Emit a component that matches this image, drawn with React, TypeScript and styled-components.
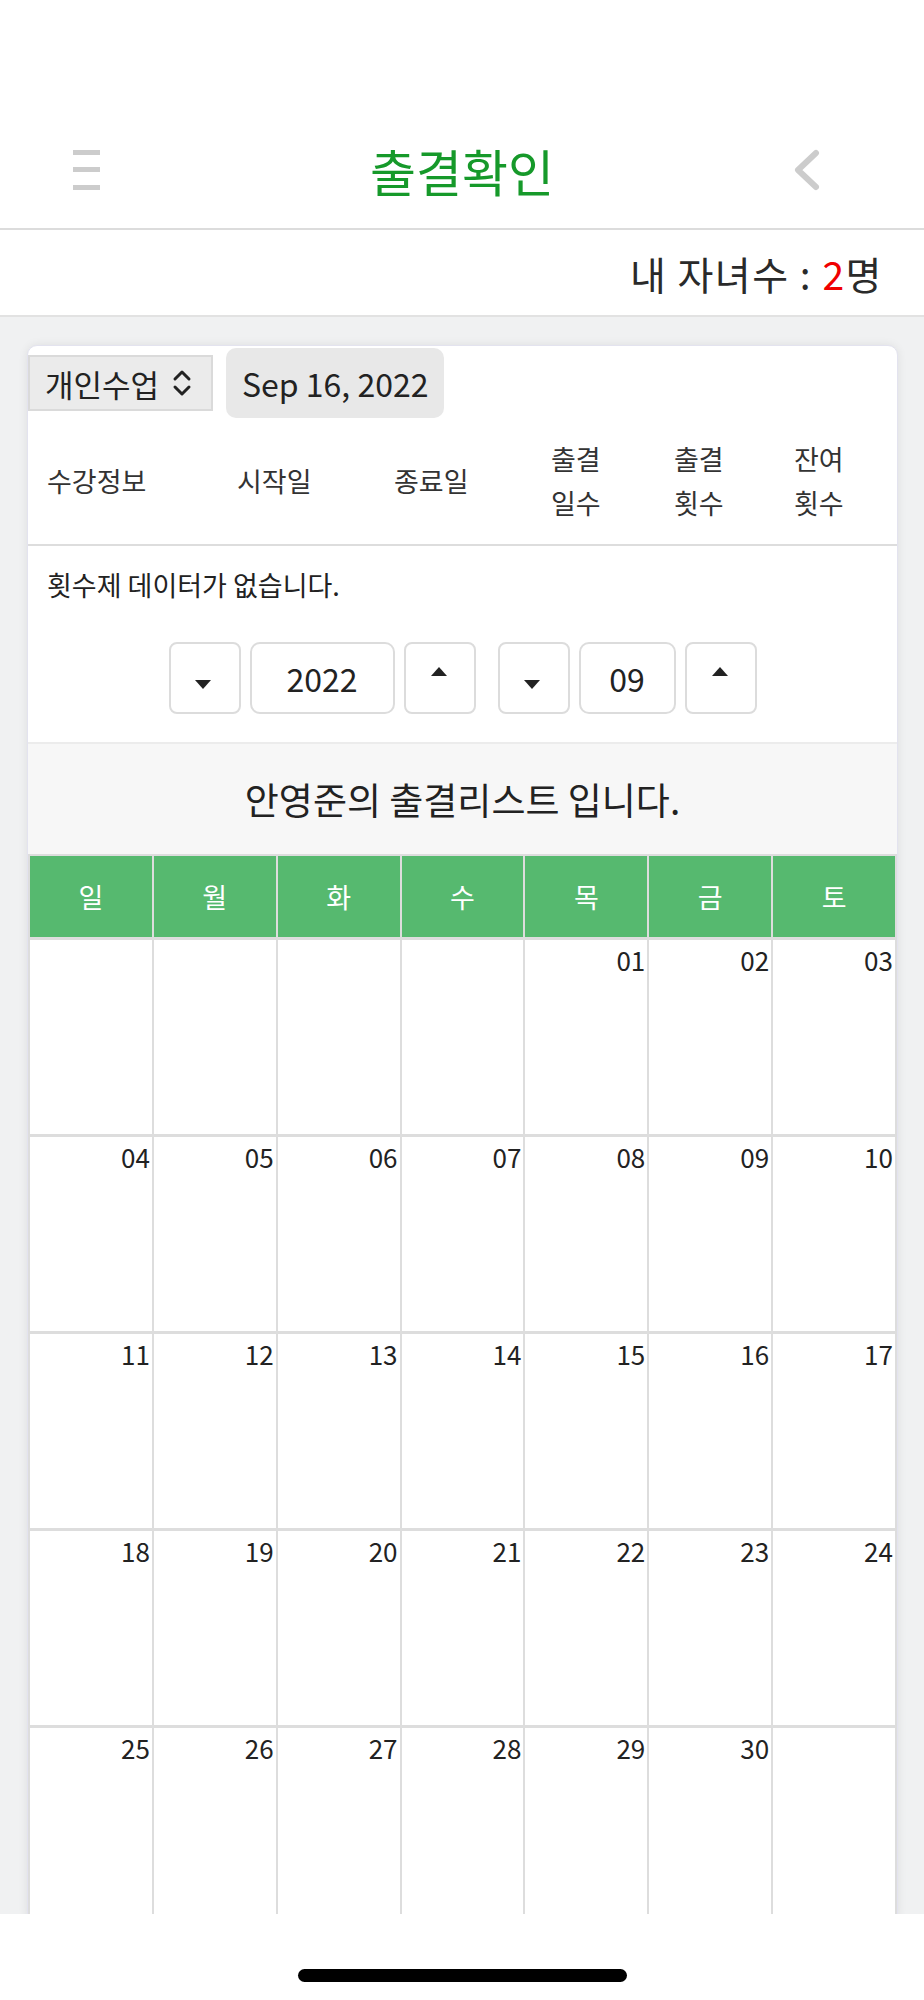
import React from 'react';
import styled, { createGlobalStyle } from 'styled-components';

const GlobalStyle = createGlobalStyle`
  body {
    margin: 0;
    background: #f0f1f2;
    font-family: "Noto Sans CJK KR", "Noto Sans", sans-serif;
    color: #222;
  }
`;

const Page = styled.div`
  min-height: 2000px;
  background: #f0f1f2;
`;

const Header = styled.header`
  display: grid;
  grid-template-columns: 1fr auto 1fr;
  align-items: center;
  height: 116px;
  padding-top: 112px;
  background: #fff;
  border-bottom: 2px solid #dcdcdc;
`;

const MenuButton = styled.div`
  justify-self: start;
  margin-left: 73px;
  display: flex;
`;

const BackButton = styled.div`
  justify-self: end;
  margin-right: 104px;
  display: flex;
`;

const Title = styled.h1`
  margin: 0;
  font-size: 50px;
  font-weight: 400;
  color: #16992a;
`;

const SubBar = styled.div`
  display: flex;
  align-items: center;
  justify-content: flex-end;
  height: 85px;
  padding-right: 41px;
  background: #fff;
  border-bottom: 2px solid #e2e2e2;
  font-size: 39px;
  font-weight: 400;
  letter-spacing: 1.5px;
  color: #2a2a2a;
  white-space: pre;
`;

const Red = styled.span`
  color: #f00000;
`;

const Main = styled.main`
  padding: 28px 26px 0 27px;
`;

const Card = styled.section`
  background: #fff;
  border: 1px solid #e3e3ef;
  border-radius: 10px;
  box-shadow: 0 0 10px rgba(0, 0, 0, 0.08);
  overflow: hidden;
`;

const TopRow = styled.div`
  display: flex;
  align-items: center;
  gap: 13px;
  padding-top: 2px;
`;

const Select = styled.div`
  display: flex;
  align-items: center;
  gap: 12px;
  box-sizing: border-box;
  width: 185px;
  height: 56px;
  padding-left: 15px;
  background: #ebebeb;
  border: 2px solid #dadada;
  font-size: 31px;
  color: #222;
`;

const DatePill = styled.div`
  display: flex;
  align-items: center;
  height: 70px;
  padding: 0 16px;
  background: #e8e8e8;
  border-radius: 10px;
  font-size: 32px;
  color: #222;
`;

const TableHead = styled.div`
  display: grid;
  grid-template-columns: 190px 157px 157px 123px 120px 1fr;
  align-items: center;
  min-height: 126px;
  padding-left: 19px;
  border-bottom: 2px solid #dddddd;
  font-size: 27px;
  line-height: 44px;
  color: #333;
`;

const Message = styled.p`
  margin: 0;
  padding: 22px 19px 0;
  font-size: 27px;
  line-height: 34px;
  color: #222;
`;

const Controls = styled.div`
  display: flex;
  justify-content: center;
  gap: 22px;
  margin-top: 40px;
`;

const Group = styled.div`
  display: flex;
  gap: 9px;
`;

const StepButton = styled.div<{ $dir: 'up' | 'down' }>`
  display: flex;
  align-items: center;
  justify-content: center;
  box-sizing: border-box;
  width: 72px;
  height: 72px;
  background: #fff;
  border: 2px solid #dcdcdc;
  border-radius: 8px;

  &::before {
    content: '';
    width: 0;
    height: 0;
    border-left: 8px solid transparent;
    border-right: 8px solid transparent;
    ${({ $dir }) =>
      $dir === 'down'
        ? 'border-top: 9px solid #222; margin-top: 12px; margin-right: 4px;'
        : 'border-bottom: 9px solid #222; margin-top: -14px; margin-right: 2px;'}
  }
`;

const ValueBox = styled.div<{ $width: number }>`
  display: flex;
  align-items: center;
  justify-content: center;
  box-sizing: border-box;
  width: ${({ $width }) => $width}px;
  height: 72px;
  background: #fff;
  border: 2px solid #dcdcdc;
  border-radius: 10px;
  font-size: 32px;
  color: #222;
`;

const ListTitle = styled.div`
  display: flex;
  align-items: center;
  justify-content: center;
  height: 110px;
  margin-top: 28px;
  background: #f7f7f7;
  border-top: 2px solid #ececec;
  font-size: 37px;
  color: #222;
`;

const Calendar = styled.div`
  display: grid;
  grid-template-columns: repeat(7, 1fr);
  gap: 3px 2px;
  padding: 2px;
  background: #dddddd;
`;

const DayHead = styled.div`
  display: flex;
  align-items: center;
  justify-content: center;
  height: 81px;
  background: #56b96f;
  color: #fff;
  font-size: 27px;
`;

const DayCell = styled.div`
  box-sizing: border-box;
  height: 194px;
  padding: 3px 2px 0 0;
  background: #fff;
  text-align: right;
  font-size: 26px;
  line-height: 34px;
  color: #222;
`;

const HomeBar = styled.div`
  position: fixed;
  left: 0;
  right: 0;
  bottom: 0;
  height: 86px;
  display: flex;
  align-items: flex-end;
  justify-content: center;
  padding-bottom: 18px;
  box-sizing: border-box;
  background: #fff;
`;

const HomePill = styled.div`
  width: 329px;
  height: 13px;
  border-radius: 7px;
  background: #000;
`;

const MenuIcon = () => (
  <svg width="27" height="40" viewBox="0 0 27 40">
    <rect x="0" y="0" width="27" height="5" fill="#cccccc" />
    <rect x="0" y="17" width="27" height="5" fill="#cccccc" />
    <rect x="0" y="35" width="27" height="5" fill="#cccccc" />
  </svg>
);

const ChevronLeft = () => (
  <svg width="26" height="42" viewBox="0 0 26 42">
    <polyline
      points="22,4 4,21 22,38"
      fill="none"
      stroke="#cccccc"
      strokeWidth="6"
      strokeLinecap="round"
      strokeLinejoin="round"
    />
  </svg>
);

const UpDownIcon = () => (
  <svg width="22" height="30" viewBox="0 0 22 30">
    <polyline points="4,11 11,4 18,11" fill="none" stroke="#222" strokeWidth="3" strokeLinecap="round" strokeLinejoin="round" />
    <polyline points="4,19 11,26 18,19" fill="none" stroke="#222" strokeWidth="3" strokeLinecap="round" strokeLinejoin="round" />
  </svg>
);

const columns = [
  '수강정보',
  '시작일',
  '종료일',
  ['출결', '일수'],
  ['출결', '횟수'],
  ['잔여', '횟수'],
];

const weekdays = ['일', '월', '화', '수', '목', '금', '토'];

// Sep 2022 starts on Thursday
const days: (string | null)[] = [
  ...Array(4).fill(null),
  ...Array.from({ length: 30 }, (_, i) => String(i + 1).padStart(2, '0')),
  null,
];

const App: React.FC = () => {
  return (
    <Page>
      <GlobalStyle />
      <Header>
        <MenuButton>
          <MenuIcon />
        </MenuButton>
        <Title>출결확인</Title>
        <BackButton>
          <ChevronLeft />
        </BackButton>
      </Header>
      <SubBar>
        {'내 자녀수 : '}
        <Red>2</Red>명
      </SubBar>
      <Main>
        <Card>
          <TopRow>
            <Select>
              개인수업
              <UpDownIcon />
            </Select>
            <DatePill>Sep 16, 2022</DatePill>
          </TopRow>
          <TableHead>
            {columns.map((col, index) => (
              <div key={index}>
                {Array.isArray(col) ? (
                  <>
                    {col[0]}
                    <br />
                    {col[1]}
                  </>
                ) : (
                  col
                )}
              </div>
            ))}
          </TableHead>
          <Message>횟수제 데이터가 없습니다.</Message>
          <Controls>
            <Group>
              <StepButton $dir="down" />
              <ValueBox $width={145}>2022</ValueBox>
              <StepButton $dir="up" />
            </Group>
            <Group>
              <StepButton $dir="down" />
              <ValueBox $width={97}>09</ValueBox>
              <StepButton $dir="up" />
            </Group>
          </Controls>
          <ListTitle>안영준의 출결리스트 입니다.</ListTitle>
          <Calendar>
            {weekdays.map(day => (
              <DayHead key={day}>{day}</DayHead>
            ))}
            {days.map((day, index) => (
              <DayCell key={index}>{day}</DayCell>
            ))}
          </Calendar>
        </Card>
      </Main>
      <HomeBar>
        <HomePill />
      </HomeBar>
    </Page>
  );
};

export default App;
